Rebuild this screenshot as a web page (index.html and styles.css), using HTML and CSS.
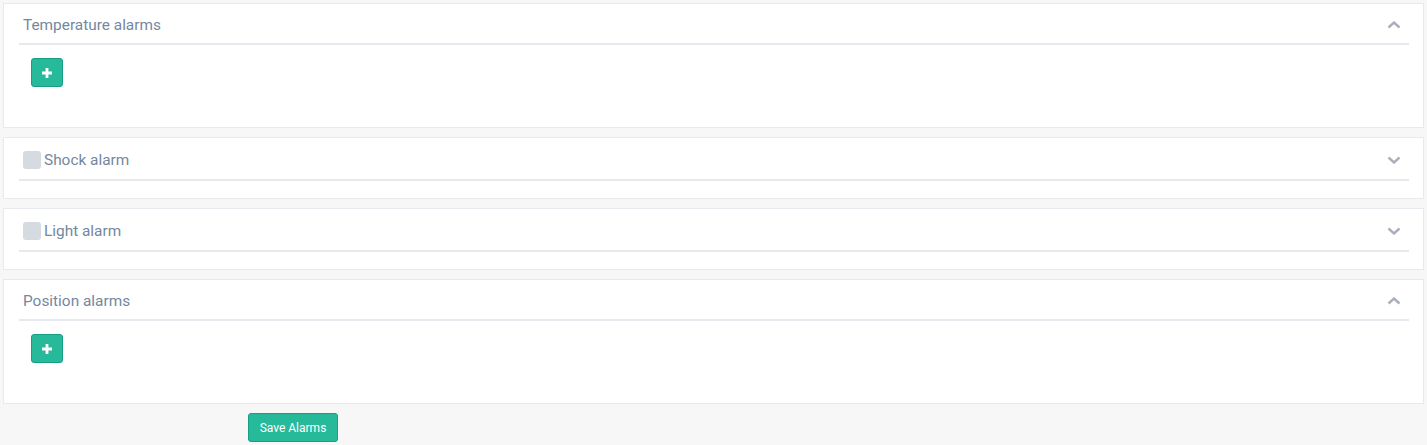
FILE: index.html
```html
<!DOCTYPE html>
<html lang="en">
  <head>
    <meta charset="UTF-8" />
    <meta name="viewport" content="width=device-width, initial-scale=1.0" />
    <title>Alarms</title>
    <link rel="stylesheet" href="styles.css">
  </head>
  <body>
    <div class="alarms">
      <div class="x-panel">
        <div class="x-title">
          <h2>Temperature alarms</h2>
          <span class="toolbox">
            <svg width="14" height="8" viewBox="0 0 14 8"><path d="M1.5 6.5 L7 1.5 L12.5 6.5" fill="none" stroke="#aab0b9" stroke-width="2.4" /></svg>
          </span>
        </div>
        <div class="x-content">
          <button class="btn add-btn">
            <svg width="10" height="10" viewBox="0 0 10 10"><path d="M0 3.6h10v2.8H0zM3.6 0h2.8v10H3.6z" fill="#fff" /></svg>
          </button>
        </div>
      </div>

      <div class="x-panel collapsed">
        <div class="x-title with-check">
          <label class="check-label"><span class="check"></span>Shock alarm</label>
          <span class="toolbox">
            <svg width="14" height="8" viewBox="0 0 14 8"><path d="M1.5 1.5 L7 6.5 L12.5 1.5" fill="none" stroke="#aab0b9" stroke-width="2.4" /></svg>
          </span>
        </div>
      </div>

      <div class="x-panel collapsed">
        <div class="x-title with-check">
          <label class="check-label"><span class="check"></span>Light alarm</label>
          <span class="toolbox">
            <svg width="14" height="8" viewBox="0 0 14 8"><path d="M1.5 1.5 L7 6.5 L12.5 1.5" fill="none" stroke="#aab0b9" stroke-width="2.4" /></svg>
          </span>
        </div>
      </div>

      <div class="x-panel">
        <div class="x-title">
          <h2>Position alarms</h2>
          <span class="toolbox">
            <svg width="14" height="8" viewBox="0 0 14 8"><path d="M1.5 6.5 L7 1.5 L12.5 6.5" fill="none" stroke="#aab0b9" stroke-width="2.4" /></svg>
          </span>
        </div>
        <div class="x-content">
          <button class="btn add-btn">
            <svg width="10" height="10" viewBox="0 0 10 10"><path d="M0 3.6h10v2.8H0zM3.6 0h2.8v10H3.6z" fill="#fff" /></svg>
          </button>
        </div>
      </div>

      <div class="form-actions">
        <button class="btn save-btn">Save Alarms</button>
      </div>
    </div>
  </body>
</html>
```

FILE: styles.css
```css
* {
  margin: 0;
  padding: 0;
  box-sizing: border-box;
}

body {
  font-family: Roboto, "Helvetica Neue", Arial, sans-serif;
  background-color: #f7f7f7;
  color: #73879c;
  padding: 3px;
}

.x-panel {
  background-color: #fff;
  border: 1px solid #e6e9ed;
  padding: 10px 14px 10px 15px;
  margin-bottom: 9px;
}

.x-title {
  display: flex;
  align-items: center;
  justify-content: space-between;
  height: 31px;
  padding: 0 8px 7px 4px;
  border-bottom: 2px solid #e6e9ed;
  margin-bottom: 7px;
}

.x-title.with-check {
  height: 33px;
}

.x-title h2,
.check-label {
  font-size: 15.4px;
  font-weight: 400;
  line-height: 22px;
  color: #7587a0;
}

.check-label {
  display: flex;
  align-items: center;
}

.check {
  width: 18px;
  height: 18px;
  border-radius: 3px;
  background-color: #d5dbe0;
  margin-right: 3px;
}

.toolbox {
  display: flex;
  align-items: center;
}

.collapsed .x-title {
  margin-bottom: 0;
}

.collapsed {
  padding-bottom: 17px;
}

.x-content {
  padding: 6px 12px 30px;
}

.btn {
  display: flex;
  align-items: center;
  justify-content: center;
  background-color: #26b99a;
  border: 1px solid #169f85;
  border-radius: 3px;
  color: #fff;
  cursor: pointer;
  font-family: Roboto, Arial, sans-serif;
}

.add-btn {
  width: 32px;
  height: 29px;
}

.add-btn svg {
  margin-top: 1px;
}

.form-actions {
  padding-left: 245px;
}

.save-btn {
  width: 90px;
  height: 29px;
  font-size: 12px;
}
```
